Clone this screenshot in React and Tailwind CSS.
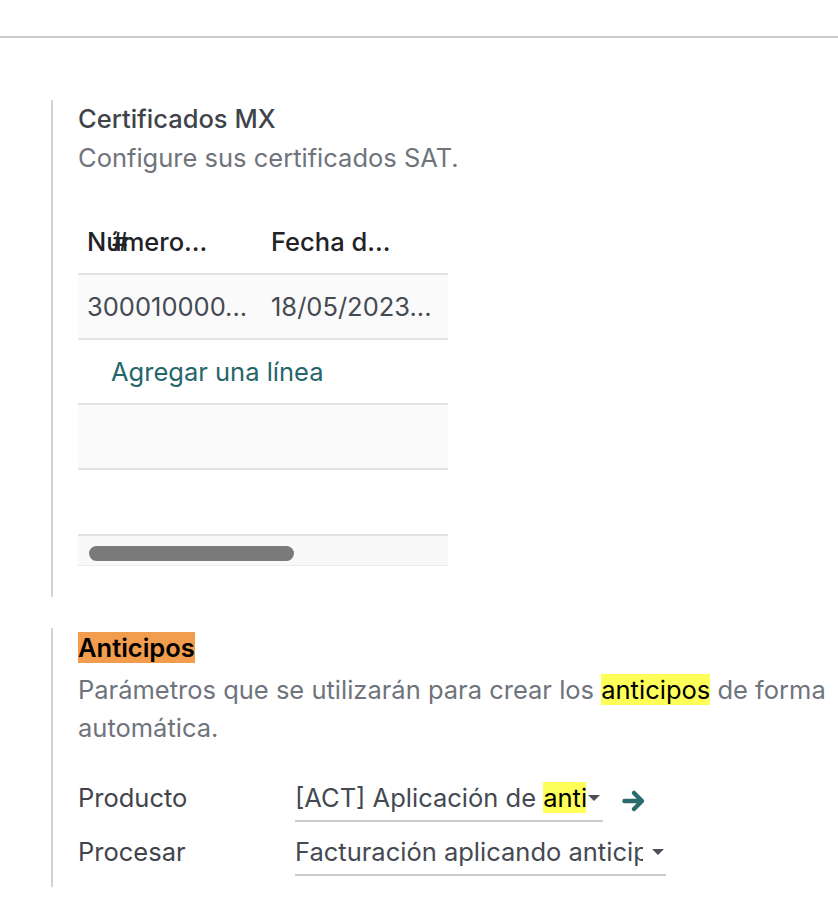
import { useState } from "react";

function Caret({ className = "" }) {
  return (
    <svg width="14" height="8" viewBox="0 0 14 8" className={className}>
      <path d="M1 1 L13 1 L7 7 Z" fill="#4b5057" />
    </svg>
  );
}

function ArrowIcon() {
  return (
    <svg width="26" height="24" viewBox="0 0 26 24" className="ml-[18px]">
      <path
        d="M3.5 12 H20 M13 4 L21 12 L13 20"
        fill="none"
        stroke="#2a6b6e"
        strokeWidth="4.5"
        strokeLinecap="round"
        strokeLinejoin="round"
      />
    </svg>
  );
}

function CertificatesTable() {
  const rows = [{ number: "300010000...", date: "18/05/2023..." }];

  return (
    <div className="mt-[33px] w-[370px]">
      <div className="flex h-[65px] items-center border-b-2 border-[#e2e2e8] text-[#1f2328] font-medium">
        <div className="relative w-[184px] pl-[9px]">
          Número...
          <span className="absolute left-[34px] top-0">#</span>
        </div>
        <div className="pl-[9px]">Fecha d...</div>
      </div>
      {rows.map((row) => (
        <div
          key={row.number}
          className="flex h-[65px] items-center border-b-2 border-[#e2e2e8] bg-[#fafafa] text-[#454a52]"
        >
          <div className="w-[184px] pl-[9px]">{row.number}</div>
          <div className="pl-[9px]">{row.date}</div>
        </div>
      ))}
      <div className="flex h-[65px] items-center border-b-2 border-[#e2e2e8]">
        <span className="pl-[33px] text-[#25666a]">Agregar una línea</span>
      </div>
      <div className="h-[65px] border-b-2 border-[#e2e2e8] bg-[#fafafa]" />
      <div className="h-[64px]" />
      <div className="h-[32px] border-t-2 border-b border-t-[#e0e0e5] border-b-[#ececee] bg-[#f9f9f9] pt-[10px] pl-[11px]">
        <div className="h-[15px] w-[205px] rounded-full bg-[#7a7a7a]" />
      </div>
    </div>
  );
}

function FieldRow({ label, children, extra, className = "" }) {
  return (
    <div className={`flex items-start ${className}`}>
      <div className="w-[217px] text-[#3f444b]">{label}</div>
      <div className="flex items-center">
        {children}
        {extra}
      </div>
    </div>
  );
}

export default function App() {
  const [product] = useState("[ACT] Aplicación de ");

  return (
    <div className="min-h-screen bg-white font-['Inter',sans-serif] text-[25.5px] leading-[38px]">
      <div className="h-[38px] border-b-2 border-[#cbcbd0]" />

      <div className="pt-[62px]">
        <section className="ml-[51px] h-[497px] border-l-2 border-[#d1d1d6] pl-[25px]">
          <h2 className="font-medium text-[#3f444b]">Certificados MX</h2>
          <p className="mt-px text-[#6f747c]">Configure sus certificados SAT.</p>
          <CertificatesTable />
        </section>

        <section className="mt-[31px] ml-[51px] h-[259px] border-l-2 border-[#d1d1d6] pl-[25px]">
          <h2 className="pt-px font-semibold text-black">
            <span className="bg-[#f29c4d]">Anticipos</span>
          </h2>
          <p className="mt-1 text-[#6f747c]">
            Parámetros que se utilizarán para crear los{" "}
            <span className="bg-[#ffff5a] text-black">anticipos</span> de forma
            <br />
            automática.
          </p>

          <FieldRow
            label="Producto"
            className="mt-[32px]"
            extra={<ArrowIcon />}
          >
            <div className="flex w-[308px] items-center border-b-2 border-[#cccccc] pb-[3px]">
              <span className="w-[291px] overflow-hidden whitespace-nowrap text-[#454a52]">
                {product}
                <span className="bg-[#ffff5a] text-black">anticipos</span>
              </span>
              <Caret className="ml-px" />
            </div>
          </FieldRow>

          <FieldRow label="Procesar" className="mt-[11px]">
            <div className="flex w-[371px] items-center border-b-2 border-[#cccccc] pb-[3px]">
              <span className="w-[348px] overflow-hidden whitespace-nowrap text-[#454a52]">
                Facturación aplicando anticipos
              </span>
              <Caret className="ml-[8px]" />
            </div>
          </FieldRow>
        </section>
      </div>
    </div>
  );
}
